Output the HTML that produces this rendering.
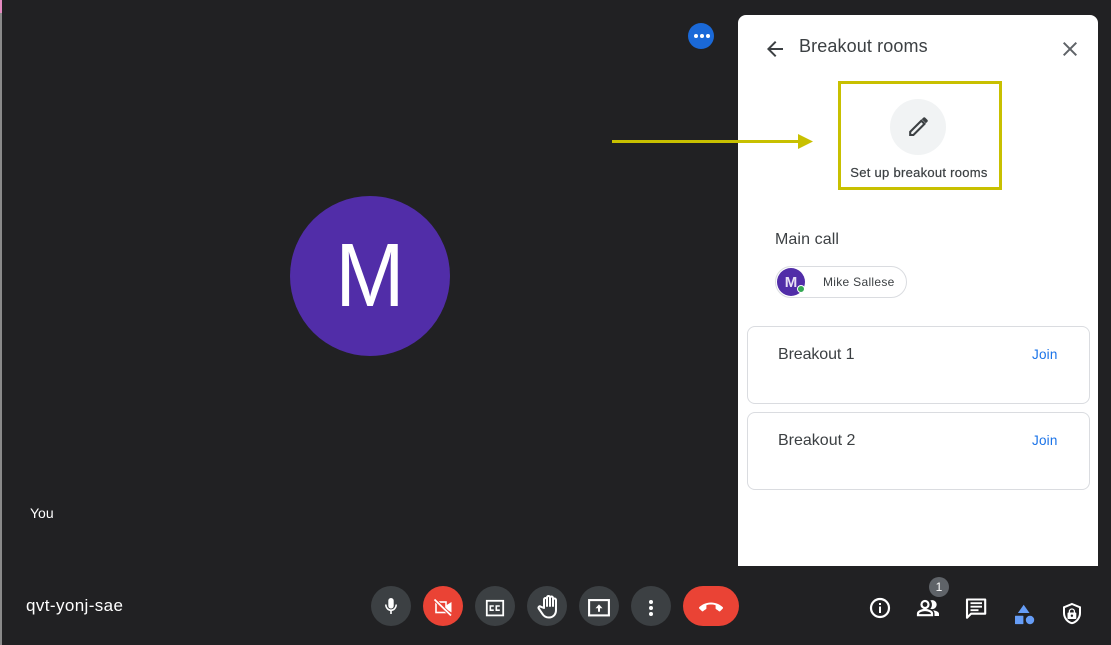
<!DOCTYPE html>
<html><head><meta charset="utf-8"><style>
html,body{margin:0;padding:0;width:1111px;height:645px;overflow:hidden;background:#212123}
body{position:relative;font-family:"Liberation Sans",sans-serif}
.a{position:absolute;white-space:nowrap}
.c{position:absolute;top:586px;width:40px;height:40px;border-radius:50%;background:#3c4043}
.card{position:absolute;left:747px;width:341px;height:76px;border:1px solid #dadce0;border-radius:8px}
</style></head><body>
<div class="a" style="left:0;top:0;width:2px;height:13px;background:#e58ac0"></div>
<div class="a" style="left:0;top:13px;width:2px;height:632px;background:#8a8a8a"></div>
<div class="a" style="left:688px;top:23px;width:26px;height:26px;border-radius:50%;background:#1a69d8"></div>
<div class="a" style="left:695px;top:34px;width:4px;height:4px;border-radius:50%;background:#fff;box-shadow:6px 0 #fff,12px 0 #fff;margin-left:-1px"></div>

<div class="a" style="left:290px;top:196px;width:160px;height:160px;border-radius:50%;background:#512da8"></div>
<div class="a" style="left:290px;top:226px;width:160px;text-align:center;font-size:83px;line-height:100px;color:#fff;transform:scaleY(1.08)">M</div>
<div class="a" style="left:30px;top:505px;font-size:14px;line-height:16px;color:#fff">You</div>
<div class="a" style="left:26px;top:596px;font-size:17px;line-height:20px;letter-spacing:.4px;color:#fff">qvt-yonj-sae</div>

<div class="a" style="left:738px;top:15px;width:360px;height:551px;background:#fff;border-radius:8px 8px 0 0"></div>
<svg class="a" style="left:763px;top:37px" width="24" height="24" viewBox="0 0 24 24" fill="#3c4043"><path d="M20 11H7.830l5.590-5.590L12 4l-8 8 8 8 1.410-1.410L7.830 13H20v-2z"/></svg>
<div class="a" style="left:799px;top:35px;font-size:18px;line-height:22px;letter-spacing:.12px;color:#3c4043">Breakout rooms</div>
<svg class="a" style="left:1058px;top:37px" width="24" height="24" viewBox="0 0 24 24" fill="#5f6368"><path d="M19 6.410L17.590 5 12 10.590 6.410 5 5 6.410 10.590 12 5 17.590 6.410 19 12 13.410 17.590 19 19 17.590 13.410 12z"/></svg>

<div class="a" style="left:837.500px;top:80.500px;width:158px;height:103px;border:3px solid #c8c000"></div>
<div class="a" style="left:890px;top:99px;width:56px;height:56px;border-radius:50%;background:#f1f3f4"></div>
<svg class="a" style="left:906px;top:115px" width="24" height="24" viewBox="0 0 24 24"><path d="M4.200 20v-3.200L15.300 5.700l3.200 3.200L7.400 20z" fill="none" stroke="#3c4043" stroke-width="2.100"/><path d="M15.700 4.200l1.500-1.400a1.500 1.500 0 0 1 2.100 0l2 2a1.500 1.500 0 0 1 0 2.100l-1.500 1.400z" fill="#3c4043"/></svg>
<div class="a" style="left:838px;top:165px;width:162px;text-align:center;font-size:13px;line-height:15px;letter-spacing:.28px;color:#3c4043;-webkit-text-stroke:.2px #3c4043">Set up breakout rooms</div>

<div class="a" style="left:612px;top:140px;width:189px;height:3px;background:#c8c000"></div>
<svg class="a" style="left:798px;top:134px" width="16" height="15" viewBox="0 0 16 15" fill="#c8c000"><path d="M0 0L15 7.500 0 15z"/></svg>

<div class="a" style="left:775px;top:230px;font-size:16px;line-height:20px;letter-spacing:.1px;color:#3c4043">Main call</div>
<div class="a" style="left:775px;top:266px;width:130px;height:30px;border:1px solid #dadce0;border-radius:16px"></div>
<div class="a" style="left:777px;top:268px;width:28px;height:28px;border-radius:50%;background:#512da8;color:#e8e0f5;font-size:15px;font-weight:bold;line-height:30px;text-align:center">M</div>
<div class="a" style="left:797px;top:285px;width:6px;height:6px;border-radius:50%;background:#34a853;border:1.500px solid #fff"></div>
<div class="a" style="left:823px;top:275px;font-size:12px;line-height:15px;letter-spacing:.3px;color:#3c4043">Mike Sallese</div>

<div class="card" style="top:326px"></div>
<div class="a" style="left:778px;top:345px;font-size:16px;line-height:20px;letter-spacing:-.1px;color:#3c4043">Breakout 1</div>
<div class="a" style="left:1032px;top:347px;font-size:13.500px;line-height:16px;letter-spacing:.2px;color:#1a73e8">Join</div>
<div class="card" style="top:412px"></div>
<div class="a" style="left:778px;top:431px;font-size:16px;line-height:20px;color:#3c4043">Breakout 2</div>
<div class="a" style="left:1032px;top:433px;font-size:13.500px;line-height:16px;letter-spacing:.2px;color:#1a73e8">Join</div>

<div class="c" style="left:371px"></div>
<div class="c" style="left:423px;background:#ea4335"></div>
<div class="c" style="left:475px"></div>
<div class="c" style="left:527px"></div>
<div class="c" style="left:579px"></div>
<div class="c" style="left:631px"></div>
<div class="c" style="left:683px;width:56px;border-radius:20px;background:#ea4335"></div>
<div class="a" style="left:929px;top:577px;width:20px;height:20px;border-radius:50%;background:#5f6368;color:#fff;font-size:12px;line-height:20px;text-align:center">1</div>

<svg class="a" style="left:0;top:0" width="1111" height="645" viewBox="0 0 1111 645">
<rect x="388.300" y="598" width="5.400" height="10.500" rx="2.700" fill="#fff"/>
<path d="M385.800 604.500c0 3.400 2.500 5.800 5.200 5.800s5.200-2.400 5.200-5.800" fill="none" stroke="#fff" stroke-width="1.500"/>
<rect x="390.200" y="610" width="1.600" height="4" fill="#fff"/>
<rect x="436" y="602" width="10" height="10.500" fill="none" stroke="#fff" stroke-width="1.600"/>
<path d="M446 605.500l5.500-3.500v10.500l-5.500-3.500z" fill="#fff"/>
<path d="M434.500 599.500L451 615.500" stroke="#ea4335" stroke-width="3.400"/>
<path d="M434.500 599.500L451 615.500" stroke="#fff" stroke-width="1.700"/>
<rect x="486.800" y="600.800" width="16.400" height="14.600" fill="none" stroke="#fff" stroke-width="1.800"/>
<path d="M493.800 606h-3.500v4.200h3.500M499.800 606h-3.500v4.200h3.500" fill="none" stroke="#fff" stroke-width="1.600"/>
<path d="M544 608V599.500a1.500 1.500 0 0 1 3 0V606V597.500a1.500 1.500 0 0 1 3 0V606V598a1.500 1.500 0 0 1 3 0V606V600a1.500 1.500 0 0 1 3 0V610c0 4.500-3 7.500-7 7.500c-3 0-5-1-6.500-3.500l-3.800-5.500c-.8-1.200.8-2.800 2-1.800z" fill="none" stroke="#fff" stroke-width="2" stroke-linejoin="round"/>
<rect x="589.100" y="600.100" width="19.800" height="15.300" fill="none" stroke="#fff" stroke-width="2.100"/>
<path d="M595.500 608.200L599 604.400l3.500 3.800h-2.500v3.500h-2v-3.500z" fill="#fff"/>
<circle cx="651" cy="602" r="2" fill="#fff"/><circle cx="651" cy="608" r="2" fill="#fff"/><circle cx="651" cy="614" r="2" fill="#fff"/>
<path transform="translate(699 595.500)" fill="#fff" d="M12 9c-1.600 0-3.150.25-4.600.72v3.100c0 .39-.23.74-.56.900-.98.490-1.870 1.120-2.660 1.850-.18.180-.43.280-.7.280-.28 0-.53-.110-.710-.290L.29 13.080a.956.956 0 0 1-.29-.7c0-.28.110-.53.290-.71C3.340 8.780 7.460 7 12 7s8.660 1.780 11.710 4.670c.18.180.29.430.29.710 0 .28-.110.530-.29.710l-2.480 2.480c-.18.180-.430.290-.710.290-.270 0-.520-.110-.700-.280-.790-.740-1.690-1.360-2.670-1.850a.996.996 0 0 1-.560-.900v-3.100C15.150 9.250 13.600 9 12 9z"/>
<circle cx="880" cy="608" r="9" fill="none" stroke="#fff" stroke-width="2.200"/>
<rect x="879" y="603" width="2" height="2" fill="#fff"/><rect x="879" y="606.500" width="2" height="6.500" fill="#fff"/>
<circle cx="925" cy="604.500" r="3.500" fill="none" stroke="#fff" stroke-width="2.200"/>
<path d="M918 615.200v-1.700c0-2 4-3.500 7-3.500s7 1.500 7 3.500v1.700z" fill="none" stroke="#fff" stroke-width="2.200"/>
<path d="M930.300 600.500a4.500 4.500 0 1 1 0 8.200a6 6 0 0 0 0-8.200z" fill="#fff"/>
<path d="M933 610.200c3 .4 6 1.600 6 3.600v2.200h-4.500v-2.300c0-1.500-.5-2.500-1.500-3.500z" fill="#fff"/>
<path d="M967 599.500h18.200v14.200H971l-4 4z" fill="none" stroke="#fff" stroke-width="2.100" stroke-linejoin="round"/>
<path d="M970.500 603.200h11.500M970.500 606.700h11.500M970.500 610.200h8" stroke="#fff" stroke-width="1.800"/>
<path d="M1023.700 604.700l5.800 8.300h-11.600z" fill="#669df6"/>
<rect x="1015" y="615.700" width="8.400" height="8.400" rx=".5" fill="#669df6"/>
<circle cx="1030" cy="620" r="4.200" fill="#669df6"/>
<path d="M1072 604l8 3.300v5.700c0 4.800-3.400 9-8 10.200c-4.600-1.200-8-5.400-8-10.200v-5.700z" fill="none" stroke="#fff" stroke-width="2"/>
<rect x="1067.500" y="612.500" width="8.800" height="6.500" rx=".8" fill="#fff"/>
<path d="M1069.400 612.500v-1a2.500 2.500 0 0 1 5 0v1" fill="none" stroke="#fff" stroke-width="1.300"/>
<circle cx="1071.900" cy="615.700" r="1.200" fill="#212123"/>
</svg>
</body></html>
